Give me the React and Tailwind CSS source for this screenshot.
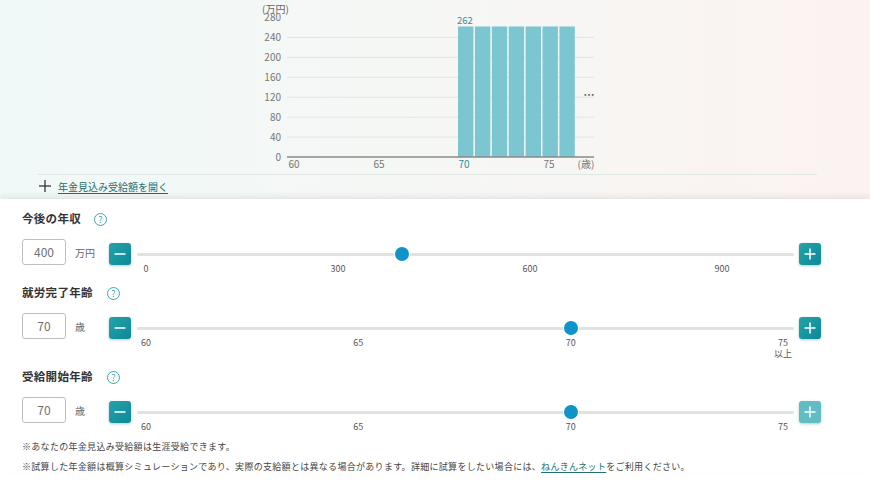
import React from 'react';

const JP = { fontFamily: '"Noto Sans CJK JP", "Liberation Sans", sans-serif' };

const yOf = (v) => 157 - v * 0.4982;

const Chart = () => {
  const grid = [40, 80, 120, 160, 200, 240];
  const labels = [0, 40, 80, 120, 160, 200, 240, 280];
  const bars = [0, 1, 2, 3, 4, 5, 6];
  return (
    <svg width="370" height="174" className="block ml-[240px]" style={JP}>
      <text x="22" y="13" fontSize="10" fill="#666">(万円)</text>
      {grid.map((g) => (
        <line key={g} x1="47" x2="354" y1={yOf(g)} y2={yOf(g)} stroke="#e2e5e4" strokeWidth="1" />
      ))}
      {labels.map((l) => (
        <text key={l} x="41" y={yOf(l) + 3.5} fontSize="10" fill="#777" textAnchor="end">{l}</text>
      ))}
      {bars.map((b) => (
        <rect key={b} x={218 + b * 16.9} y={yOf(262)} width="15.4" height={157 - yOf(262)} fill="#7cc6d1" />
      ))}
      <line x1="47" x2="354" y1="157" y2="157" stroke="#8a8a8a" strokeWidth="1.5" />
      <text x="225" y="24" fontSize="9.5" fill="#3b8e97" textAnchor="middle">262</text>
      <text x="54" y="168" fontSize="10" fill="#777" textAnchor="middle">60</text>
      <text x="139" y="168" fontSize="10" fill="#777" textAnchor="middle">65</text>
      <text x="224" y="168" fontSize="10" fill="#2f8f99" textAnchor="middle">70</text>
      <text x="309" y="168" fontSize="10" fill="#777" textAnchor="middle">75</text>
      <text x="346" y="168" fontSize="10" fill="#777" textAnchor="middle">(歳)</text>
      <text x="349" y="99" fontSize="11" fill="#555" textAnchor="middle" fontWeight="bold">…</text>
    </svg>
  );
};

const Help = () => (
  <span className="w-[13px] h-[13px] rounded-full border border-[#45a3ab] text-[#45a3ab] text-[9px] leading-none flex items-center justify-center">?</span>
);

const Btn = ({ kind, light }) => (
  <div
    className={`w-[22px] h-[22px] rounded-[3px] flex items-center justify-center shrink-0 shadow-[0_1px_3px_rgba(0,80,90,0.3)] ${
      light ? 'bg-[#62bcc4]' : 'bg-linear-to-br from-[#23a4a8] to-[#0c8898]'
    }`}
  >
    <svg width="12" height="12" viewBox="0 0 12 12">
      <line x1="0.5" x2="11.5" y1="6" y2="6" stroke="#fff" strokeWidth="1.5" />
      {kind === 'plus' && <line x1="6" x2="6" y1="0.5" y2="11.5" stroke="#fff" strokeWidth="1.5" />}
    </svg>
  </div>
);

const Section = ({ title, value, unit, min, max, span, ticks, helpGap, extra, lightPlus, className }) => {
  const pos = (v) => 9 + ((v - min) / (max - min)) * span;
  return (
    <div className={className}>
      <div className="flex items-center h-[16px] pl-[22px] mb-[12px]">
        <span className="text-[11.5px] font-bold text-[#333] tracking-[0.3px]">{title}</span>
        <span className={helpGap}><Help /></span>
      </div>
      <div className="flex items-start h-[26px] pl-[22px]">
        <div className="w-[44px] h-[26px] border border-[#bdbdbd] rounded-[3px] flex items-center justify-center text-[12px] text-[#707070] bg-white">
          {value}
        </div>
        <span className="w-[43px] h-[26px] pl-[9px] flex items-center text-[10px] text-[#666]">{unit}</span>
        <div className="w-[712px] h-[22px] mt-[4px] flex items-center">
          <Btn kind="minus" />
          <div className="relative h-[22px] flex-1 ml-[6px] mr-[5px]">
            <div className="absolute left-0 right-0 top-[9.5px] h-[3px] bg-[#dfe4df] rounded-full" />
            <div
              className="absolute top-[4px] w-[14px] h-[14px] -ml-[7px] rounded-full bg-[#0f93c8] shadow-[0_0_0_1px_rgba(255,255,255,0.8)]"
              style={{ left: pos(value) }}
            />
            {ticks.map((t, i) => (
              <div
                key={t}
                className="absolute top-[21px] -translate-x-1/2 text-[9px] leading-[10px] text-[#555] text-center whitespace-nowrap"
                style={{ left: pos(t) }}
              >
                {t}
                {extra && i === ticks.length - 1 && <div className="mt-[1px]">{extra}</div>}
              </div>
            ))}
          </div>
          <Btn kind="plus" light={lightPlus} />
        </div>
      </div>
    </div>
  );
};

const App = () => {
  return (
    <div className="w-[870px] min-h-[483px] bg-white overflow-hidden" style={JP}>
      <div className="h-[199px] bg-linear-to-r from-[#f0f9f8] via-[#f6f7f5] to-[#fbf3f1] flex flex-col">
        <Chart />
        <div className="ml-[38px] w-[779px] border-t border-[#dfe6e3]" />
        <div className="flex items-center pl-[39px] mt-[4px] h-[14px]">
          <svg width="12" height="12" viewBox="0 0 12 12">
            <line x1="0" x2="12" y1="6" y2="6" stroke="#333" strokeWidth="1.3" />
            <line x1="6" x2="6" y1="0" y2="12" stroke="#333" strokeWidth="1.3" />
          </svg>
          <a className="ml-[7px] text-[10px] text-[#22706f] underline underline-offset-2">年金見込み受給額を開く</a>
        </div>
      </div>
      <div className="relative bg-white shadow-[0_-3px_6px_rgba(0,0,0,0.07)] pt-[12px]">
        <Section
          title="今後の年収"
          value={400}
          unit="万円"
          min={0}
          max={1000}
          span={640}
          ticks={[0, 300, 600, 900]}
          helpGap="ml-[13px]"
          className="mb-[20px]"
        />
        <Section
          title="就労完了年齢"
          value={70}
          unit="歳"
          min={60}
          max={75}
          span={637}
          ticks={[60, 65, 70, 75]}
          extra="以上"
          helpGap="ml-[14px]"
          className="mb-[30px]"
        />
        <Section
          title="受給開始年齢"
          value={70}
          unit="歳"
          min={60}
          max={75}
          span={637}
          ticks={[60, 65, 70, 75]}
          helpGap="ml-[14px]"
          lightPlus
          className="mb-[18px]"
        />
        <p className="pl-[22px] text-[9px] leading-[12px] tracking-[0.3px] text-[#444]">
          ※あなたの年金見込み受給額は生涯受給できます。
        </p>
        <p className="pl-[22px] mt-[8px] text-[9px] leading-[12px] tracking-[0.3px] text-[#444]">
          ※試算した年金額は概算シミュレーションであり、実際の支給額とは異なる場合があります。詳細に試算をしたい場合には、
          <a className="text-[#22706f] underline underline-offset-2">ねんきんネット</a>
          をご利用ください。
        </p>
      </div>
    </div>
  );
};

export default App;
